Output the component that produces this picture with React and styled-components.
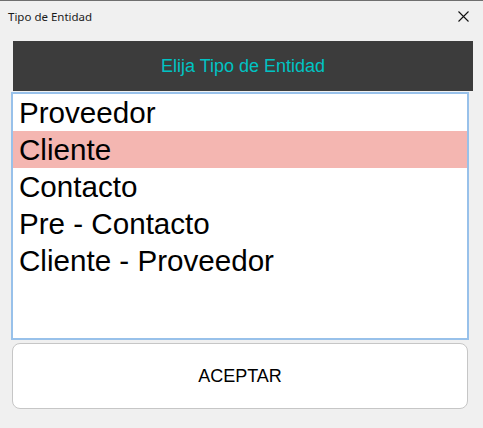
import React, { useState } from "react";
import styled, { createGlobalStyle } from "styled-components";

const Global = createGlobalStyle`
  html, body { margin: 0; padding: 0; background: #f0f0f0; }
  body { font-family: "Liberation Sans", Arial, sans-serif; }
`;

const Window = styled.div`
  width: 483px;
  height: 428px;
  box-sizing: border-box;
  border-top: 1px solid #6f6f6f;
  background: #f0f0f0;
  display: flex;
  flex-direction: column;
  overflow: hidden;
`;

const TitleBar = styled.div`
  height: 40px;
  display: flex;
  align-items: center;
  justify-content: space-between;
  padding: 0 14px 0 8px;
  box-sizing: border-box;
`;

const TitleText = styled.span`
  font-family: "Noto Sans", "Open Sans", sans-serif;
  font-size: 11.5px;
  color: #1b1b1b;
  margin-top: -9px;
`;

const Close = styled.svg`
  width: 11px;
  height: 11px;
  margin-top: -9px;
`;

const Header = styled.div`
  margin-left: 13px;
  width: 460px;
  height: 50px;
  background: #3c3c3c;
  color: #00c3c3;
  font-size: 18px;
  display: flex;
  align-items: center;
  justify-content: center;
  padding-top: 1px;
  box-sizing: border-box;
`;

const List = styled.ul`
  list-style: none;
  margin: 1px 0 0 11px;
  padding: 0;
  width: 458px;
  height: 248px;
  box-sizing: border-box;
  border: 2px solid #98c1ea;
  background: #fff;
`;

const Item = styled.li`
  height: 37px;
  line-height: 37px;
  font-size: 29.6px;
  color: #000;
  padding-left: 6px;
  background: ${(p) => (p.$selected ? "#f4b6b1" : "transparent")};
  cursor: default;
`;

const Button = styled.button`
  margin: 3px 0 0 12px;
  width: 456px;
  height: 66px;
  box-sizing: border-box;
  border: 1px solid #c6c6c6;
  border-radius: 8px;
  background: #fff;
  font-family: "Liberation Sans", Arial, sans-serif;
  font-size: 18px;
  color: #000;
  padding: 0;
`;

const items = ["Proveedor", "Cliente", "Contacto", "Pre - Contacto", "Cliente - Proveedor"];

export default function App() {
  const [sel, setSel] = useState(1);
  return (
    <>
      <Global />
      <Window>
        <TitleBar>
          <TitleText>Tipo de Entidad</TitleText>
          <Close viewBox="0 0 11 11">
            <path d="M0.5 0.5 L10.5 10.5 M10.5 0.5 L0.5 10.5" stroke="#111" strokeWidth="1.1" fill="none" />
          </Close>
        </TitleBar>
        <Header>Elija Tipo de Entidad</Header>
        <List>
          {items.map((t, i) => (
            <Item key={t} $selected={i === sel} onClick={() => setSel(i)}>
              {t}
            </Item>
          ))}
        </List>
        <Button>ACEPTAR</Button>
      </Window>
    </>
  );
}
